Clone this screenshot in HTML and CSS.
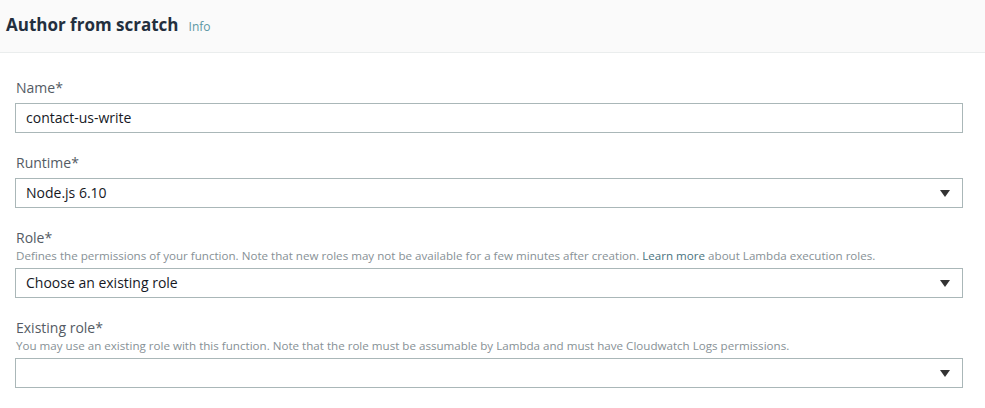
FILE: index.html
```html
<!DOCTYPE html>
<html>
<head>
<meta charset="utf-8">
<link rel="stylesheet" href="styles.css">
</head>
<body>
<div class="panel">
  <div class="panel-header">
    <h2 class="title">Author from scratch</h2>
    <span class="info">Info</span>
  </div>
  <div class="form">
    <div class="field">
      <div class="label">Name*</div>
      <div class="input">contact-us-write</div>
    </div>
    <div class="field">
      <div class="label">Runtime*</div>
      <div class="input select">Node.js 6.10<span class="caret"></span></div>
    </div>
    <div class="field">
      <div class="label">Role*</div>
      <div class="desc">Defines the permissions of your function. Note that new roles may not be available for a few minutes after creation. <span class="link">Learn more</span> about Lambda execution roles.</div>
      <div class="input select">Choose an existing role<span class="caret"></span></div>
    </div>
    <div class="field">
      <div class="label">Existing role*</div>
      <div class="desc">You may use an existing role with this function. Note that the role must be assumable by Lambda and must have Cloudwatch Logs permissions.</div>
      <div class="input select"><span class="caret"></span></div>
    </div>
  </div>
</div>
</body>
</html>
```
FILE: styles.css
```css
* { box-sizing: border-box; }
html, body { margin: 0; padding: 0; background: #fff; }
body { font-family: "Open Sans", "Noto Sans", sans-serif; color: #16191f; }

.panel-header {
  height: 53px;
  background: #fafafa;
  border-bottom: 1px solid #eaeded;
  display: flex;
  align-items: baseline;
  padding: 13px 0 0 6px;
}
.title {
  margin: 0;
  font-size: 17px;
  font-weight: 700;
  line-height: 24px;
  color: #232f3e;
}
.info {
  margin-left: 10px;
  font-size: 12px;
  color: #5b97a3;
}

.form {
  padding: 25px 22px 0 15px;
  display: flex;
  flex-direction: column;
  gap: 20px;
}
.field { display: flex; flex-direction: column; }
.label {
  font-size: 14px;
  line-height: 20px;
  color: #545b64;
  padding-left: 1px;
}
.desc {
  font-size: 11.6px;
  line-height: 15px;
  color: #879196;
  padding-left: 1px;
}
.link { color: #4a7380; }
.input {
  margin-top: 5px;
  height: 30px;
  border: 1px solid #aab7b8;
  padding: 0 10px;
  font-size: 14px;
  line-height: 28px;
  color: #16191f;
  display: flex;
  align-items: center;
}
.select { justify-content: space-between; }
.caret {
  margin-left: auto;
  margin-right: 2px;
  width: 0;
  height: 0;
  border-left: 5px solid transparent;
  border-right: 5px solid transparent;
  border-top: 7px solid #333;
}
```
